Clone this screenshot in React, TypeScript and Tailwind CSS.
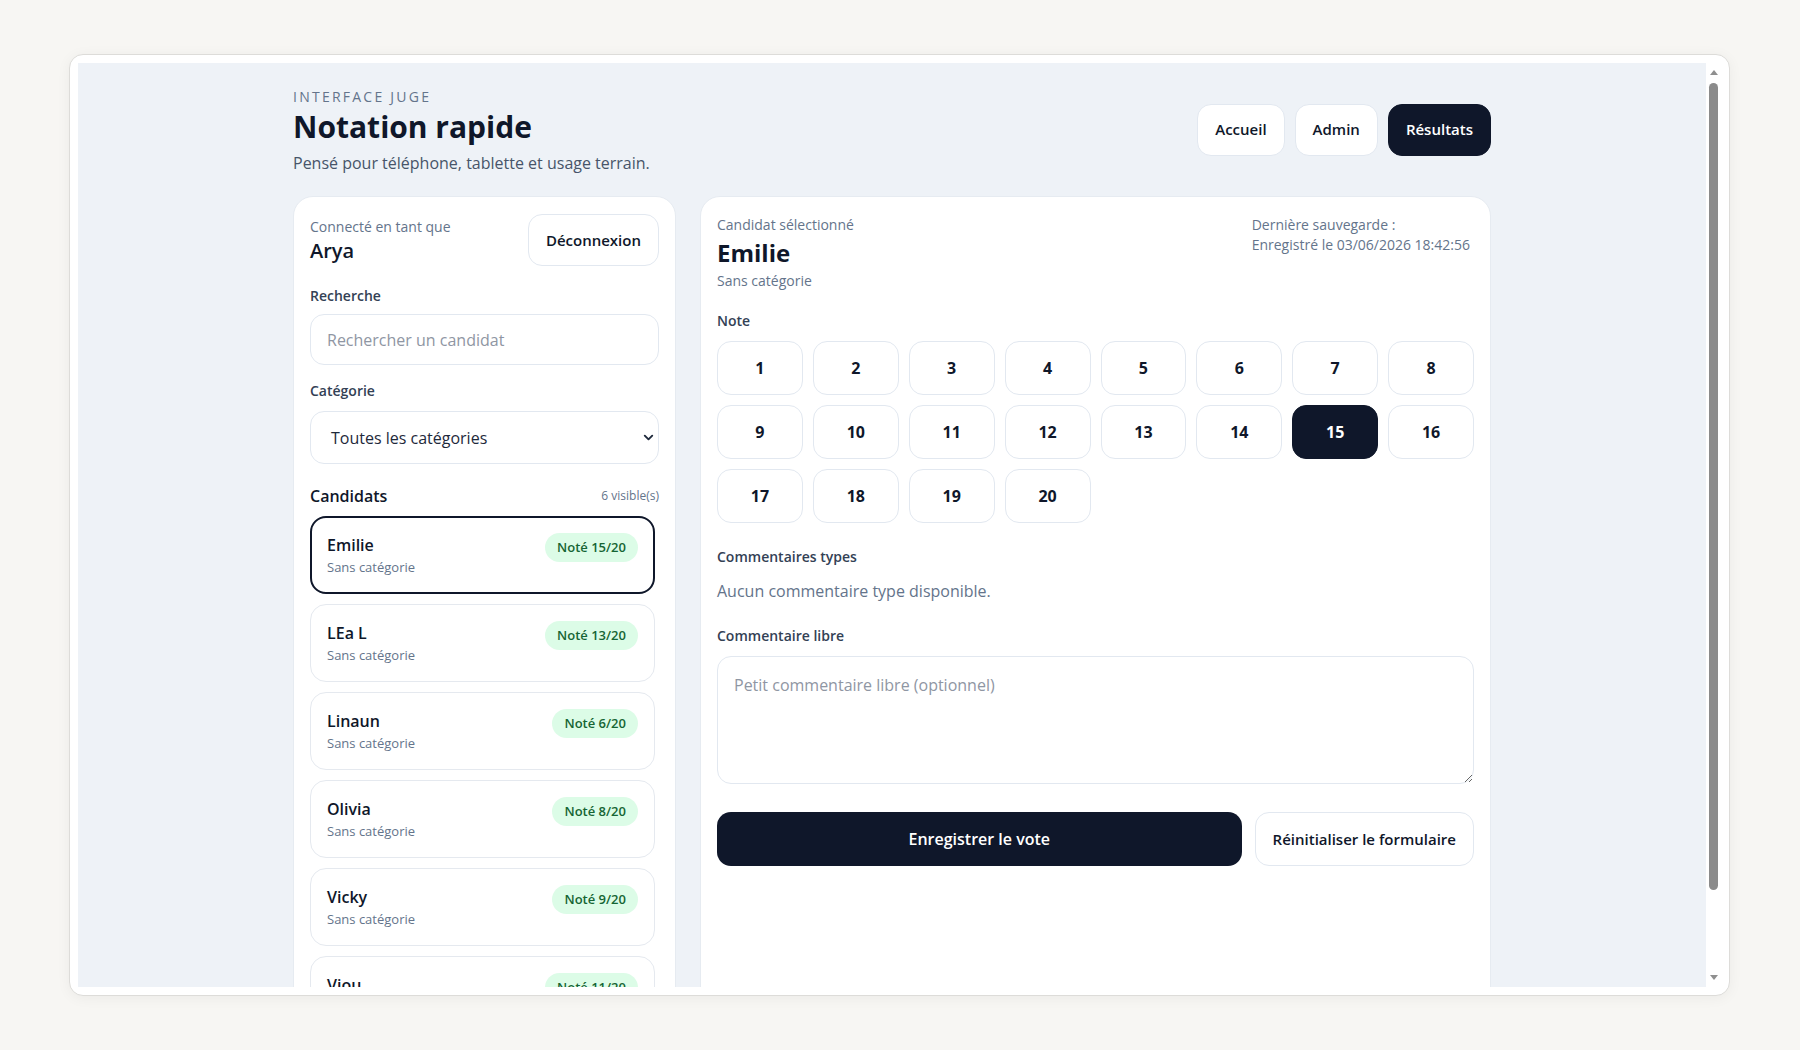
import { ChevronDown } from 'lucide-react';

const candidates = [
  { name: 'Emilie', category: 'Sans catégorie', note: 15 },
  { name: 'LEa L', category: 'Sans catégorie', note: 13 },
  { name: 'Linaun', category: 'Sans catégorie', note: 6 },
  { name: 'Olivia', category: 'Sans catégorie', note: 8 },
  { name: 'Vicky', category: 'Sans catégorie', note: 9 },
  { name: 'Viou', category: 'Sans catégorie', note: 11 },
];

const grades = Array.from({ length: 20 }, (_, i) => i + 1);
const selectedGrade = 15;

function Scrollbar() {
  return (
    <div className="flex w-[15px] flex-col items-center bg-white">
      <svg width="8" height="5" viewBox="0 0 8 5" className="mt-[7px]">
        <path d="M4 0L8 5H0z" fill="#8f8f8f" />
      </svg>
      <div className="mt-[8px] h-[807px] w-[9px] rounded-full bg-[#8b8b8b]" />
      <div className="flex-1" />
      <svg width="8" height="5" viewBox="0 0 8 5" className="mb-[7px]">
        <path d="M0 0H8L4 5z" fill="#8f8f8f" />
      </svg>
    </div>
  );
}

export default function App() {
  return (
    <main className="h-screen w-full overflow-hidden bg-[#f7f6f3] pl-[69px] pt-[54px] font-['Open_Sans','Noto_Sans',sans-serif]">
      {/* Fenêtre */}
      <div className="flex h-[942px] w-[1661px] rounded-[14px] border border-[#dddcd9] bg-white p-2 shadow-[0_2px_14px_rgba(0,0,0,0.05)]">
        <div className="flex-1 overflow-hidden bg-[#eef2f7]">
          <div className="mx-auto w-[1198px] pb-6 pt-6">
            {/* Header */}
            <header className="mb-[21px] flex items-center justify-between">
              <div>
                <p className="text-[14px] uppercase leading-5 tracking-[0.16em] text-[#64748b]">Interface juge</p>
                <h1 className="text-[30px] font-bold leading-10 text-[#0f172a]">Notation rapide</h1>
                <p className="mt-1 text-base leading-6 text-[#475569]">Pensé pour téléphone, tablette et usage terrain.</p>
              </div>
              <nav className="-mt-[3px] flex gap-2.5">
                <button className="h-[52px] rounded-[14px] border border-[#e2e8f0] bg-white px-[17px] text-[15px] font-semibold text-[#0f172a]">
                  Accueil
                </button>
                <button className="h-[52px] rounded-[14px] border border-[#e2e8f0] bg-white px-[17px] text-[15px] font-semibold text-[#0f172a]">
                  Admin
                </button>
                <button className="h-[52px] rounded-[14px] border border-[#0f172a] bg-[#0f172a] px-[17px] text-[15px] font-semibold text-white">
                  Résultats
                </button>
              </nav>
            </header>

            <div className="grid grid-cols-[383px_1fr] gap-6">
              {/* Colonne gauche */}
              <section className="rounded-[20px] border border-[#e6ebf1] bg-white px-4 pb-4 pt-[18px]">
                <div className="flex items-start justify-between">
                  <div className="pt-[2px]">
                    <p className="text-sm leading-5 text-[#64748b]">Connecté en tant que</p>
                    <p className="text-xl font-semibold leading-7 text-[#0f172a]">Arya</p>
                  </div>
                  <button className="-mt-px h-[52px] rounded-[14px] border border-[#e2e8f0] bg-white px-[17px] text-[15px] font-semibold text-[#0f172a]">
                    Déconnexion
                  </button>
                </div>

                <label className="mt-5 mb-2 block text-sm font-semibold leading-5 text-[#334155]">Recherche</label>
                <input
                  className="h-[51px] w-full rounded-[14px] border border-[#e2e8f0] bg-white px-4 text-base text-[#0f172a] outline-none placeholder:text-[#8f96a3]"
                  placeholder="Rechercher un candidat"
                />

                <label className="mt-4 mb-2.5 block text-sm font-semibold leading-5 text-[#334155]">Catégorie</label>
                <div className="flex h-[53px] w-full items-center justify-between rounded-[14px] border border-[#e2e8f0] bg-white pl-5 pr-[2px] text-base text-[#1e293b]">
                  <span>Toutes les catégories</span>
                  <ChevronDown size={15} strokeWidth={3} className="text-[#1e293b]" />
                </div>

                <div className="mt-5 mb-2 flex items-center justify-between">
                  <h2 className="text-base font-semibold leading-6 text-[#0f172a]">Candidats</h2>
                  <span className="text-xs text-[#64748b]">6 visible(s)</span>
                </div>

                <ul className="flex flex-col gap-2.5 pr-1">
                  {candidates.map((c, i) => (
                    <li
                      key={c.name}
                      className={
                        i === 0
                          ? 'flex items-start justify-between rounded-2xl border-2 border-[#0f172a] bg-white p-[15px]'
                          : 'flex items-start justify-between rounded-2xl border border-[#e5e9ef] bg-white p-4'
                      }
                    >
                      <div>
                        <p className="text-base font-semibold leading-6 text-[#0f172a]">{c.name}</p>
                        <p className="text-[13px] leading-5 text-[#64748b]">{c.category}</p>
                      </div>
                      <span className="flex h-[29px] items-center rounded-full bg-[#dcfce7] px-3 text-[13px] font-semibold text-[#166534]">
                        Noté {c.note}/20
                      </span>
                    </li>
                  ))}
                </ul>
              </section>

              {/* Colonne droite */}
              <section className="rounded-[20px] border border-[#e6ebf1] bg-white px-4 pb-4 pt-[18px]">
                <div className="flex items-start justify-between">
                  <div>
                    <p className="text-sm leading-5 text-[#64748b]">Candidat sélectionné</p>
                    <h2 className="mt-0.5 text-2xl font-bold leading-8 text-[#0f172a]">Emilie</h2>
                    <p className="mt-0.5 text-sm leading-5 text-[#64748b]">Sans catégorie</p>
                  </div>
                  <div className="pr-1 text-sm leading-5 text-[#64748b]">
                    <p>Dernière sauvegarde :</p>
                    <p>Enregistré le 03/06/2026 18:42:56</p>
                  </div>
                </div>

                <p className="mt-5 mb-2.5 text-sm font-semibold leading-5 text-[#334155]">Note</p>
                <div className="grid grid-cols-8 gap-2.5">
                  {grades.map((g) => (
                    <button
                      key={g}
                      className={
                        g === selectedGrade
                          ? 'h-[54px] rounded-[14px] border border-[#0f172a] bg-[#0f172a] text-base font-bold text-white'
                          : 'h-[54px] rounded-[14px] border border-[#e2e8f0] bg-white text-base font-bold text-[#0f172a]'
                      }
                    >
                      {g}
                    </button>
                  ))}
                </div>

                <p className="mt-6 text-sm font-semibold leading-5 text-[#334155]">Commentaires types</p>
                <p className="mt-3 text-base leading-6 text-[#64748b]">Aucun commentaire type disponible.</p>

                <p className="mt-[23px] mb-2.5 text-sm font-semibold leading-5 text-[#334155]">Commentaire libre</p>
                <textarea
                  className="block h-[128px] w-full rounded-[14px] border border-[#e2e8f0] bg-white px-4 py-4 text-base leading-6 text-[#0f172a] outline-none placeholder:text-[#8f96a3]"
                  placeholder="Petit commentaire libre (optionnel)"
                />

                <div className="mt-7 flex gap-[13px]">
                  <button className="h-[54px] flex-1 rounded-[14px] bg-[#0f172a] text-base font-semibold text-white">
                    Enregistrer le vote
                  </button>
                  <button className="h-[54px] rounded-[14px] border border-[#e2e8f0] bg-white px-[17px] text-[15px] font-semibold text-[#0f172a]">
                    Réinitialiser le formulaire
                  </button>
                </div>
              </section>
            </div>
          </div>
        </div>
        <Scrollbar />
      </div>
    </main>
  );
}
